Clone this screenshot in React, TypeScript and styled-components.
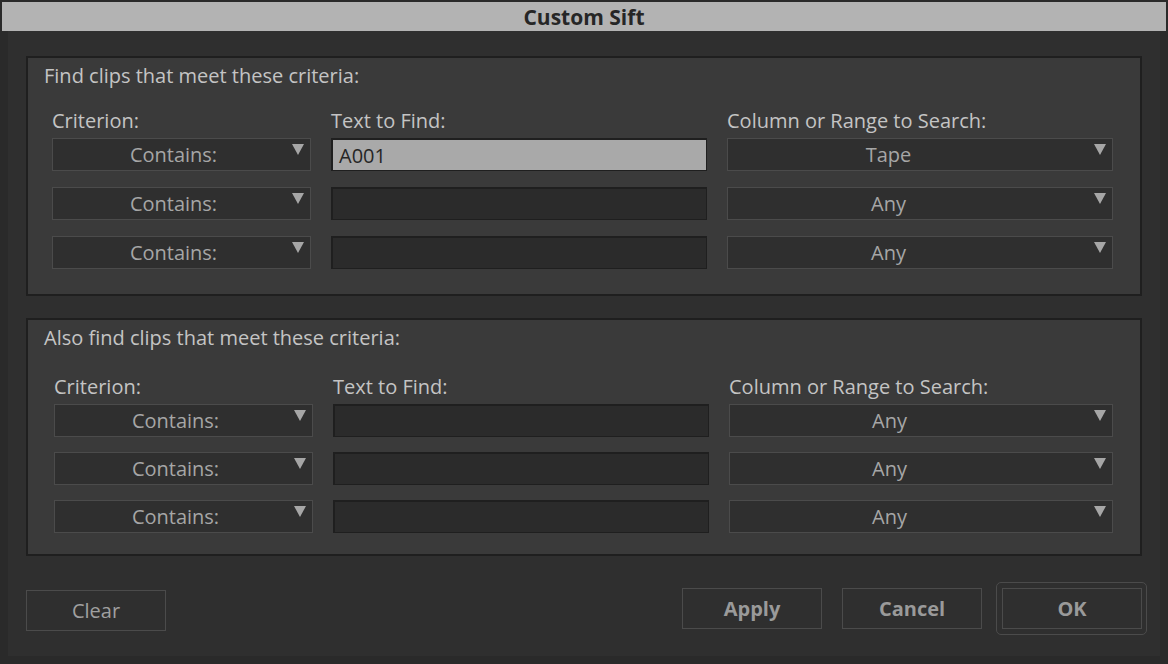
import React from "react";
import styled, { createGlobalStyle } from "styled-components";

const Global = createGlobalStyle`
  html, body { margin: 0; padding: 0; background: #2a2a2a; }
  body { font-family: "Open Sans", "Noto Sans", sans-serif; }
  * { box-sizing: border-box; }
`;

const Window = styled.div`
  width: 1168px;
  height: 664px;
  background: #2a2a2a;
  padding: 2px;
  display: flex;
  flex-direction: column;
`;

const TitleBar = styled.div`
  height: 29px;
  background: #b3b3b3;
  display: flex;
  align-items: center;
  justify-content: center;
  font-weight: 700;
  font-size: 21px;
  color: #262626;
  flex: none;
`;

const Body = styled.div`
  flex: 1;
  margin: 0 6px 6px 6px;
  background: #2f2f2f;
  padding: 25px 18px 0 18px;
  display: flex;
  flex-direction: column;
`;

const Panel = styled.section<{ $h: number }>`
  height: ${(p) => p.$h}px;
  flex: none;
  border: 2px solid #1f1f1f;
  background: #3a3a3a;
  padding: 6px 27px 0 16px;
  display: flex;
  flex-direction: column;
  & + & { margin-top: 22px; }
`;

const Heading = styled.div`
  font-size: 20px;
  line-height: 24px;
  color: #c4c4c4;
`;

const Grid = styled.div<{ $top: number; $rowGap: number; $indent: number }>`
  margin-top: ${(p) => p.$top}px;
  margin-left: ${(p) => p.$indent}px;
  display: grid;
  grid-template-columns: 259px 376px 1fr;
  column-gap: 20px;
  row-gap: ${(p) => p.$rowGap}px;
  grid-template-rows: ${(p) => 29 - p.$rowGap}px 33px 33px 33px;
`;

const ColLabel = styled.div`
  font-size: 20px;
  line-height: 24px;
  height: 24px;
  color: #c4c4c4;
  white-space: nowrap;
`;

const Select = styled.div<{ $padRight: number }>`
  position: relative;
  height: 33px;
  background: #2f2f2f;
  border: 1px solid #4b4b4b;
  display: flex;
  align-items: center;
  justify-content: center;
  padding-right: ${(p) => p.$padRight}px;
  font-size: 20px;
  color: #a6a6a6;
`;

const Arrow = styled.svg`
  position: absolute;
  right: 6px;
  top: 5px;
  width: 12px;
  height: 11px;
`;

const Field = styled.div<{ $filled?: boolean }>`
  height: 33px;
  background: ${(p) => (p.$filled ? "#a9a9a9" : "#2b2b2b")};
  border: 1px solid #1f1f1f;
  border-top-width: 2px;
  border-left-width: 2px;
  display: flex;
  align-items: center;
  padding-left: 6px;
  font-size: 20px;
  color: #262626;
`;

const Footer = styled.div`
  margin-top: 32px;
  display: flex;
  align-items: flex-start;
  gap: 20px;
`;

const Button = styled.div<{ $bold?: boolean; $drop?: number }>`
  width: 140px;
  height: 41px;
  border: 1px solid #4b4b4b;
  display: flex;
  align-items: center;
  justify-content: center;
  font-size: 20px;
  font-weight: ${(p) => (p.$bold ? 700 : 400)};
  color: ${(p) => (p.$bold ? "#9a9a9a" : "#a0a0a0")};
  margin-top: ${(p) => p.$drop ?? 0}px;
`;

const Spacer = styled.div`
  flex: 1;
`;

const OkRing = styled.div`
  margin: -6px -5px 0 -6px;
  padding: 5px 4px 5px 5px;
  border: 1px solid #4b4b4b;
  border-radius: 5px;
`;

const Triangle = () => (
  <Arrow viewBox="0 0 12 11">
    <polygon points="0,0 12,0 6,11" fill="#a6a6a6" />
  </Arrow>
);

type Row = { text: string; col: string };

const Criteria = ({
  title,
  rows,
  h,
  labelTop,
  rowGap,
  indent,
}: {
  title: string;
  rows: Row[];
  h: number;
  labelTop: number;
  rowGap: number;
  indent: number;
}) => (
  <Panel $h={h}>
    <Heading>{title}</Heading>
    <Grid $top={labelTop} $rowGap={rowGap} $indent={indent}>
      <ColLabel>Criterion:</ColLabel>
      <ColLabel>Text to Find:</ColLabel>
      <ColLabel>Column or Range to Search:</ColLabel>
      {rows.map((r, i) => (
        <React.Fragment key={i}>
          <Select $padRight={16}>
            Contains:
            <Triangle />
          </Select>
          <Field $filled={r.text !== ""}>{r.text}</Field>
          <Select $padRight={63}>
            {r.col}
            <Triangle />
          </Select>
        </React.Fragment>
      ))}
    </Grid>
  </Panel>
);

export default function App() {
  return (
    <>
      <Global />
      <Window>
        <TitleBar>Custom Sift</TitleBar>
        <Body>
          <Criteria
            title="Find clips that meet these criteria:"
            rows={[
              { text: "A001", col: "Tape" },
              { text: "", col: "Any" },
              { text: "", col: "Any" },
            ]}
            h={240}
            labelTop={21}
            rowGap={16}
            indent={8}
          />
          <Criteria
            title="Also find clips that meet these criteria:"
            rows={[
              { text: "", col: "Any" },
              { text: "", col: "Any" },
              { text: "", col: "Any" },
            ]}
            h={238}
            labelTop={25}
            rowGap={15}
            indent={10}
          />
          <Footer>
            <Button $drop={2}>Clear</Button>
            <Spacer />
            <Button $bold>Apply</Button>
            <Button $bold>Cancel</Button>
            <OkRing>
              <Button $bold>OK</Button>
            </OkRing>
          </Footer>
        </Body>
      </Window>
    </>
  );
}
